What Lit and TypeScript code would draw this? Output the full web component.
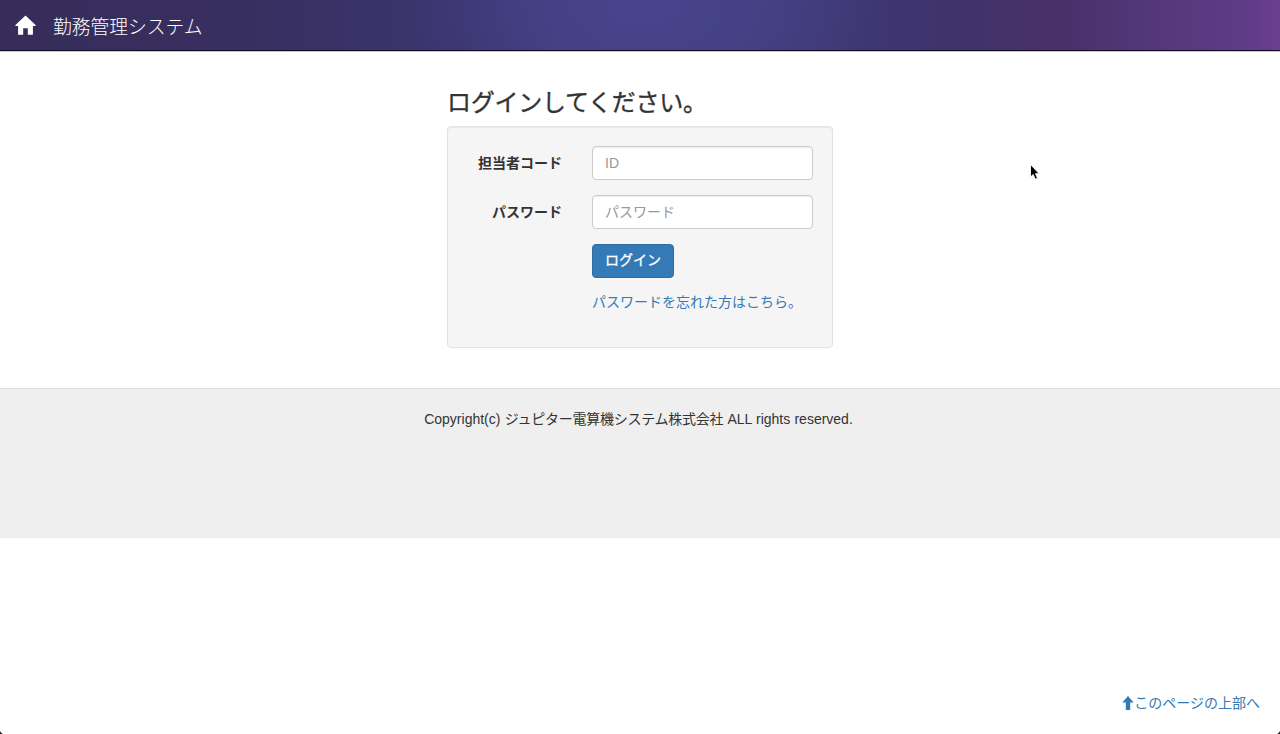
import { LitElement, html, css, svg } from "lit";
import { customElement } from "lit/decorators.js";

const home = svg`<path d="M10.3 .5 20.6 10.3 20.1 11H17.7V19.8H12.6V13.2H8V19.8H2.9V11H.5L0 10.3 3.4 7.1 10.3 .5Z" />`;
const arrowUp = svg`<path d="M5.7 0 11.4 6.6H7.9V14H3.5V6.6H0Z" />`;

@customElement("app-root")
export class AppRoot extends LitElement {
  static styles = css`
    :host {
      display: block;
      position: relative;
      height: 734px;
      overflow: hidden;
      background: #fff;
      color: #333;
      font: 14px/20px "Liberation Sans", "Noto Sans CJK JP", sans-serif;
    }
    * { box-sizing: border-box; }
    a { color: #337ab7; text-decoration: none; }
    svg { display: block; fill: currentColor; }
    .navbar {
      height: 52px;
      display: flex;
      align-items: center;
      padding: 1px 15px 0;
      border-bottom: 1px solid #c9c5d6;
      box-shadow: inset 0 -1px #120d22;
      background:
        radial-gradient(ellipse 240px 130px at 50% 0, rgba(74, 70, 146, .75), rgba(70, 68, 140, 0)),
        linear-gradient(90deg, #372d5a 0, #382f61 20%, #3b3670 36%, #403d7c 44%, #413f80 50%, #403d7b 60%, #3e3570 70%, #40326b 75%, #4a306a 83%, #533779 90%, #613c89 98%, #6a3f8e 100%);
    }
    .brand {
      display: flex;
      align-items: center;
      gap: 17px;
      color: #fff;
      font-size: 18.75px;
      font-weight: 300;
      line-height: 24px;
      white-space: nowrap;
    }
    .brand svg { margin-top: -2px; }
    .brand span { padding-top: 3px; }
    .login { width: 387px; padding-right: 1px; margin: 37px auto 0 447px; }
    .title {
      margin: 0;
      font-size: 24px;
      line-height: 28px;
      font-weight: 400;
      letter-spacing: -.25px;
      -webkit-text-stroke: .35px currentColor;
      padding-bottom: 9px;
      white-space: nowrap;
    }
    .well {
      height: 222px;
      padding: 19px 19px 0 14px;
      background: #f5f5f5;
      border: 1px solid #e3e3e3;
      border-radius: 4px;
      box-shadow: inset 0 1px 1px rgba(0, 0, 0, .05);
    }
    .row {
      display: grid;
      grid-template-columns: 100px 221px;
      column-gap: 30px;
      margin-bottom: 15px;
    }
    .label { text-align: right; font-weight: 700; padding-top: 7px; }
    .input {
      width: 100%;
      height: 34px;
      padding: 6px 12px;
      font: inherit;
      color: #555;
      background: #fff;
      border: 1px solid #ccc;
      border-radius: 4px;
      box-shadow: inset 0 1px 1px rgba(0, 0, 0, .075);
    }
    .input::placeholder { color: #999; opacity: 1; }
    .actions { margin-left: 130px; }
    .button {
      display: block;
      height: 34px;
      padding: 0 12px 2px;
      margin-bottom: 14px;
      font: inherit;
      -webkit-text-stroke: .3px currentColor;
      color: #fff;
      background: #337ab7;
      border: 1px solid #2e6da4;
      border-radius: 4px;
    }
    .forgot { display: block; white-space: nowrap; }
    .footer {
      margin-top: 40px;
      height: 150px;
      padding: 20px 3px 0 0;
      text-align: center;
      background: #efefef;
      border-top: 1px solid #e0e0e0;
      word-spacing: .3px;
    }
    .company { letter-spacing: -.25px; }
    .top {
      position: absolute;
      right: 20px;
      bottom: 21px;
      display: flex;
      align-items: center;
      gap: 0;
    }
    .cursor { position: absolute; left: 1029px; top: 163px; }
    .corner { position: absolute; bottom: 0; width: 5px; height: 5px; }
    .left { left: 0; background: radial-gradient(circle at 100% 0, transparent 5px, #222 5.6px); }
    .right { right: 0; background: radial-gradient(circle at 0 0, transparent 5px, #222 5.6px); }
  `;

  render() {
    return html`
      <nav class="navbar">
        <a class="brand" href="#">
          <svg width="21" height="20" viewBox="0 0 20.6 20">${home}</svg>
          <span>勤務管理システム</span>
        </a>
      </nav>
      <main class="login">
        <h1 class="title">ログインしてください。</h1>
        <form class="well">
          <div class="row">
            <label class="label" for="code">担当者コード</label>
            <input class="input" id="code" placeholder="ID" />
          </div>
          <div class="row">
            <label class="label" for="password">パスワード</label>
            <input class="input" id="password" type="password" placeholder="パスワード" />
          </div>
          <div class="actions">
            <button class="button" type="button">ログイン</button>
            <a class="forgot" href="#">パスワードを忘れた方はこちら。</a>
          </div>
        </form>
      </main>
      <footer class="footer">
        Copyright(c) <span class="company">ジュピター電算機システム株式会社</span> ALL rights reserved.
      </footer>
      <a class="top" href="#">
        <svg width="12" height="14" viewBox="0 0 11.4 14">${arrowUp}</svg>
        <span>このページの上部へ</span>
      </a>
      <svg class="cursor" width="12" height="19" viewBox="0 0 12 19">
        <path d="M1.5 1.5V14L4.2 11.5 6.3 16.2 8.5 15.2 6.5 10.7H10.2Z" fill="#000" stroke="#fff" stroke-width=".9" />
      </svg>
      <span class="corner left"></span>
      <span class="corner right"></span>
    `;
  }
}
